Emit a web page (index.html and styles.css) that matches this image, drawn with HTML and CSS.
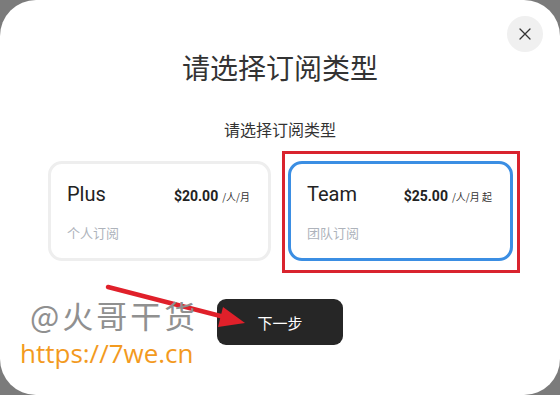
FILE: index.html
```html
<!DOCTYPE html>
<html lang="zh-CN">
<head>
<meta charset="utf-8">
<link rel="stylesheet" href="styles.css">
</head>
<body>
<div class="modal">
  <button class="close" aria-label="关闭">
    <svg width="14" height="14" viewBox="0 0 14 14"><path d="M2 2 L12 12 M12 2 L2 12" stroke="#333" stroke-width="1.3" fill="none" stroke-linecap="round"/></svg>
  </button>
  <h1 class="title">请选择订阅类型</h1>
  <p class="subtitle">请选择订阅类型</p>
  <div class="plans">
    <div class="plan">
      <div class="plan-head">
        <span class="plan-name">Plus</span>
        <span class="plan-price"><b>$20.00</b> <small>/人/月</small></span>
      </div>
      <div class="plan-desc">个人订阅</div>
    </div>
    <div class="plan selected">
      <div class="plan-head">
        <span class="plan-name">Team</span>
        <span class="plan-price"><b>$25.00</b> <small>/人/月 起</small></span>
      </div>
      <div class="plan-desc">团队订阅</div>
    </div>
  </div>
  <button class="next">下一步</button>

  <div class="mark-box"></div>
  <svg class="mark-arrow" width="560" height="395" viewBox="0 0 560 395">
    <line x1="108" y1="287" x2="236" y2="320" stroke="#e0202a" stroke-width="4.5" stroke-linecap="round"/>
    <polygon points="245,323 223,307 218,327" fill="#e0202a"/>
  </svg>
  <div class="watermark">
    <div class="wm-name">@火哥干货</div>
    <div class="wm-url">https://7we.cn</div>
  </div>
</div>
</body>
</html>
```
FILE: styles.css
```css
html, body {
  margin: 0;
  padding: 0;
}
body {
  width: 560px;
  height: 395px;
  background: #7b7b7b;
  font-family: "Noto Sans CJK SC", "Noto Sans", sans-serif;
  overflow: hidden;
}
.modal {
  position: relative;
  width: 560px;
  height: 395px;
  background: #fff;
  border-radius: 36px;
  display: flex;
  flex-direction: column;
  align-items: center;
  padding-top: 49px;
  box-sizing: border-box;
}
.close {
  position: absolute;
  left: 507px;
  top: 16px;
  width: 36px;
  height: 36px;
  border-radius: 50%;
  border: none;
  background: #f0f0f0;
  padding: 0;
  display: flex;
  align-items: center;
  justify-content: center;
}
.title {
  margin: 0;
  font-size: 28px;
  line-height: 36px;
  font-weight: 400;
  color: #333;
}
.subtitle {
  margin: 34px 0 0;
  font-size: 16px;
  line-height: 21px;
  color: #333;
}
.plans {
  display: flex;
  gap: 17px;
  margin-top: 21px;
  margin-left: 1px;
}
.plan {
  width: 223px;
  height: 100px;
  box-sizing: border-box;
  border: 3px solid #eeeeee;
  border-radius: 14px;
  padding: 18px 18px 0 16px;
}
.plan.selected {
  width: 225px;
  border-color: #3b8ee3;
}
.plan-head {
  display: flex;
  justify-content: space-between;
  align-items: baseline;
  height: 24px;
}
.plan-name {
  font-family: Roboto, "Noto Sans", sans-serif;
  font-size: 20px;
  line-height: 24px;
  color: #222;
}
.plan-price {
  font-family: Roboto, "Noto Sans CJK SC", sans-serif;
  color: #222;
  white-space: nowrap;
}
.plan-price b {
  font-size: 14px;
  font-weight: 700;
}
.plan-price small {
  font-family: "Noto Sans CJK SC", sans-serif;
  font-size: 10px;
  color: #333;
}
.plan-desc {
  margin-top: 17px;
  font-size: 13px;
  line-height: 20px;
  color: #aeb3bb;
}
.next {
  margin-top: 38px;
  width: 126px;
  height: 46px;
  border: none;
  border-radius: 9px;
  background: #262626;
  color: #fff;
  font-family: "Noto Sans CJK SC", sans-serif;
  font-size: 15px;
}
.mark-box {
  position: absolute;
  left: 282px;
  top: 151px;
  width: 238px;
  height: 122px;
  box-sizing: border-box;
  border: 3px solid #d9232e;
}
.mark-arrow {
  position: absolute;
  left: 0;
  top: 0;
  pointer-events: none;
}
.watermark {
  position: absolute;
  left: 20px;
  top: 295px;
}
.wm-name {
  margin-left: 10px;
  font-size: 31px;
  line-height: 40px;
  font-weight: 400;
  color: #909090;
  letter-spacing: 3px;
}
.wm-url {
  font-family: "Open Sans", sans-serif;
  font-size: 26px;
  line-height: 36px;
  color: #f39a1e;
}
```
